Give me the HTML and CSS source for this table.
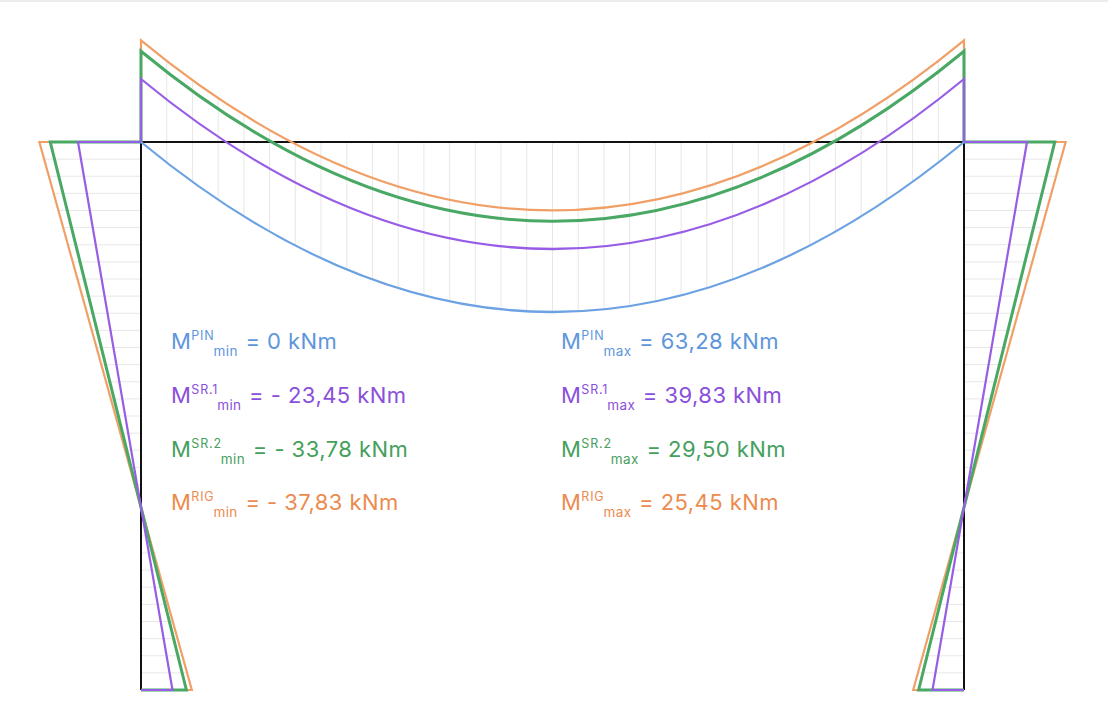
FILE: index.html
```html
<!DOCTYPE html>
<html lang="en">
<head>
<meta charset="utf-8">
<title>Bending moment diagram</title>
<link rel="stylesheet" href="styles.css">
</head>
<body>
<div class="topbar"></div>
<div class="stage">
  <svg class="diagram" width="1108" height="719" viewBox="0 2 1108 719" xmlns="http://www.w3.org/2000/svg">
    <path class="hatch" d="M166.72 60.96V162.59M192.44 80.21V181.84M218.16 98.14V199.77M243.88 114.75V216.38M269.59 130.02V231.65M295.31 142V245.59M321.03 142V258.21M346.75 142V269.5M372.47 142V279.46M398.19 142V288.09M423.91 142V295.4M449.63 142V301.38M475.34 142V306.02M501.06 142V309.34M526.78 142V311.34M552.5 142V312M578.22 142V311.34M603.94 142V309.34M629.66 142V306.02M655.38 142V301.38M681.09 142V295.4M706.81 142V288.09M732.53 142V279.46M758.25 142V269.5M783.97 142V258.21M809.69 142V245.59M835.41 130.02V231.65M861.13 114.75V216.38M886.84 98.14V199.77M912.56 80.21V181.84M938.28 60.96V162.59"/>
    <path class="hatch" d="M141 159.13H44.13M141 176.25H48.9M141 193.38H53.66M141 210.5H58.43M141 227.63H63.19M141 244.75H67.95M141 261.88H72.72M141 279H77.48M141 296.13H82.25M141 313.25H87.01M141 330.38H91.77M141 347.5H96.54M141 364.63H101.3M141 381.75H106.07M141 398.88H110.83M141 416H115.59M141 433.13H120.36M141 450.25H125.12M141 467.38H129.89M141 484.5H134.65M141 501.63H139.41M141 518.75H144.18M141 535.88H148.94M141 553H153.71M141 570.13H158.47M141 587.25H163.23M141 604.38H168M141 621.5H172.76M141 638.63H177.53M141 655.75H182.29M141 672.88H187.06"/>
    <path class="hatch" d="M964 159.13H1060.87M964 176.25H1056.1M964 193.38H1051.34M964 210.5H1046.57M964 227.63H1041.81M964 244.75H1037.05M964 261.88H1032.28M964 279H1027.52M964 296.13H1022.75M964 313.25H1017.99M964 330.38H1013.23M964 347.5H1008.46M964 364.63H1003.7M964 381.75H998.93M964 398.88H994.17M964 416H989.41M964 433.13H984.64M964 450.25H979.88M964 467.38H975.11M964 484.5H970.35M964 501.63H965.59M964 518.75H960.82M964 535.88H956.06M964 553H951.29M964 570.13H946.53M964 587.25H941.77M964 604.38H937M964 621.5H932.24M964 638.63H927.47M964 655.75H922.71M964 672.88H917.94"/>
    <path class="frame" d="M141 690V142H964V690"/>
    <path class="curve rig" d="M141 690H191.82L39.37 142H141V40.37Q552.5 380.37 964 40.37V142H1065.63L913.18 690H964"/>
    <path class="curve sr2" d="M141 690H186.38L50.25 142H141V51.25Q552.5 391.25 964 51.25V142H1054.75L918.62 690H964"/>
    <path class="curve sr1" d="M141 690H172.5L78 142H141V79Q552.5 419 964 79V142H1027L932.5 690H964"/>
    <path class="curve pin" d="M141 142Q552.5 482 964 142"/>
  </svg>
  <div class="labels">
    <div class="label t-pin">M<sup>PIN</sup><sub>min</sub> = 0 kNm</div>
    <div class="label t-pin">M<sup>PIN</sup><sub>max</sub> = 63,28 kNm</div>
    <div class="label t-sr1">M<sup>SR.1</sup><sub>min</sub> = - 23,45 kNm</div>
    <div class="label t-sr1">M<sup>SR.1</sup><sub>max</sub> = 39,83 kNm</div>
    <div class="label t-sr2">M<sup>SR.2</sup><sub>min</sub> = - 33,78 kNm</div>
    <div class="label t-sr2">M<sup>SR.2</sup><sub>max</sub> = 29,50 kNm</div>
    <div class="label t-rig">M<sup>RIG</sup><sub>min</sub> = - 37,83 kNm</div>
    <div class="label t-rig">M<sup>RIG</sup><sub>max</sub> = 25,45 kNm</div>
  </div>
</div>
</body>
</html>
```
FILE: styles.css
```css
html, body {
  margin: 0;
  padding: 0;
  background: #ffffff;
}

body {
  width: 1108px;
  height: 721px;
  overflow: hidden;
  font-family: Inter, "Liberation Sans", Arial, sans-serif;
}

.topbar {
  height: 2px;
  background: #ececec;
}

.stage {
  position: relative;
  width: 1108px;
  height: 719px;
}

.diagram {
  display: block;
}

.hatch {
  fill: none;
  stroke: #e7e7e7;
  stroke-width: 1;
}

.frame {
  fill: none;
  stroke: #111111;
  stroke-width: 2;
}

.curve {
  fill: none;
  stroke-width: 2.2;
  stroke-linejoin: miter;
}

.curve.rig { stroke: #f0a066; }
.curve.sr2 { stroke: #4aa865; stroke-width: 3; }
.curve.sr1 { stroke: #975de6; }
.curve.pin { stroke: #6ca2e2; }

.labels {
  position: absolute;
  left: 171px;
  top: 328.3px;
  display: grid;
  grid-template-columns: 390px auto;
  grid-auto-rows: 53.67px;
}

.label {
  font-size: 22px;
  line-height: 22px;
  letter-spacing: 0.45px;
  white-space: nowrap;
}

.label sup,
.label sub {
  line-height: 0;
}

.label sup {
  font-size: 12.5px;
  letter-spacing: 0.8px;
  vertical-align: 9px;
}

.label sub {
  font-size: 13.5px;
  letter-spacing: 0.4px;
  vertical-align: -7px;
  margin-left: -1px;
  margin-right: 1px;
}

.t-pin { color: #5e96dc; }
.t-sr1 { color: #8a4fdb; }
.t-sr2 { color: #45a05e; }
.t-rig { color: #ec8b4f; }
```
